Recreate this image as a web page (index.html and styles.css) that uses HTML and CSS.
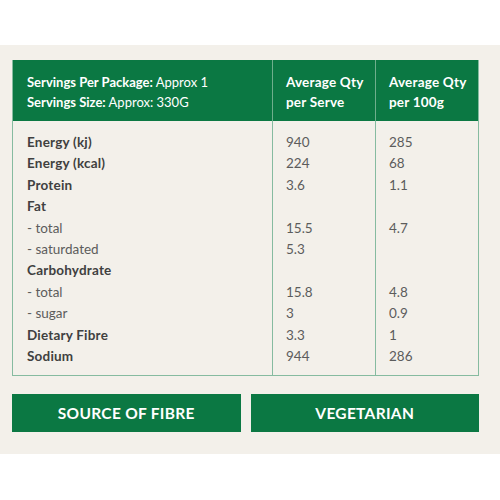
FILE: index.html
```html
<!DOCTYPE html>
<html>
<head>
<meta charset="utf-8">
<link rel="stylesheet" href="styles.css">
</head>
<body>
<section class="panel">
  <div class="nutri">
    <div class="head">
      <div class="hcell first">
        <div><b>Servings Per Package:</b> Approx 1</div>
        <div><b>Servings Size:</b> Approx: 330G</div>
      </div>
      <div class="hcell col"><b>Average Qty<br>per Serve</b></div>
      <div class="hcell col"><b>Average Qty<br>per 100g</b></div>
    </div>
    <div class="body">
      <div class="bcell first">
        <div class="r b">Energy (kj)</div>
        <div class="r b">Energy (kcal)</div>
        <div class="r b">Protein</div>
        <div class="r b">Fat</div>
        <div class="r">- total</div>
        <div class="r">- saturdated</div>
        <div class="r b">Carbohydrate</div>
        <div class="r">- total</div>
        <div class="r">- sugar</div>
        <div class="r b">Dietary Fibre</div>
        <div class="r b">Sodium</div>
      </div>
      <div class="bcell col">
        <div class="r">940</div>
        <div class="r">224</div>
        <div class="r">3.6</div>
        <div class="r"></div>
        <div class="r">15.5</div>
        <div class="r">5.3</div>
        <div class="r"></div>
        <div class="r">15.8</div>
        <div class="r">3</div>
        <div class="r">3.3</div>
        <div class="r">944</div>
      </div>
      <div class="bcell col">
        <div class="r">285</div>
        <div class="r">68</div>
        <div class="r">1.1</div>
        <div class="r"></div>
        <div class="r">4.7</div>
        <div class="r"></div>
        <div class="r"></div>
        <div class="r">4.8</div>
        <div class="r">0.9</div>
        <div class="r">1</div>
        <div class="r">286</div>
      </div>
    </div>
  </div>
  <div class="badges">
    <div class="badge">SOURCE OF FIBRE</div>
    <div class="badge">VEGETARIAN</div>
  </div>
</section>
</body>
</html>
```
FILE: styles.css
```css
html, body {
  margin: 0;
  padding: 0;
  background: #ffffff;
}
body {
  padding-top: 45px;
  font-family: Lato, "Open Sans", sans-serif;
}
.panel {
  background: #f3f0ea;
  padding: 15px 21px 22px 12px;
  height: 409px;
  box-sizing: border-box;
}
.nutri {
  border: 1px solid #86bba0;
  border-top: none;
}
.head {
  display: grid;
  grid-template-columns: 259px 103px 1fr;
  background: #0b7843;
  color: #ffffff;
  height: 61px;
}
.hcell {
  padding: 12px 0 0 14px;
  font-size: 13.5px;
  line-height: 20px;
  box-sizing: border-box;
}
.hcell.first { font-size: 13px; }
.hcell b { font-weight: 700; }
.hcell.first div { white-space: nowrap; }
.hcell.col {
  border-left: 1px solid #6fae8c;
  padding-left: 13px;
  letter-spacing: 0.2px;
}
.body {
  display: grid;
  grid-template-columns: 259px 103px 1fr;
  height: 254px;
}
.bcell {
  padding: 11px 0 0 14px;
  box-sizing: border-box;
}
.bcell.col {
  border-left: 1px solid #86bba0;
  padding-left: 13px;
}
.r {
  height: 21.4px;
  line-height: 21.4px;
  font-size: 13.5px;
  color: #5c5c5c;
}
.r.b {
  font-weight: 700;
  color: #404040;
  letter-spacing: 0.2px;
}
.badges {
  display: flex;
  gap: 10px;
  margin-top: 18px;
}
.badge {
  flex: 1;
  height: 38px;
  background: #0b7843;
  color: #ffffff;
  font-weight: 700;
  font-size: 15.5px;
  letter-spacing: 0.3px;
  display: flex;
  align-items: center;
  justify-content: center;
}
```
